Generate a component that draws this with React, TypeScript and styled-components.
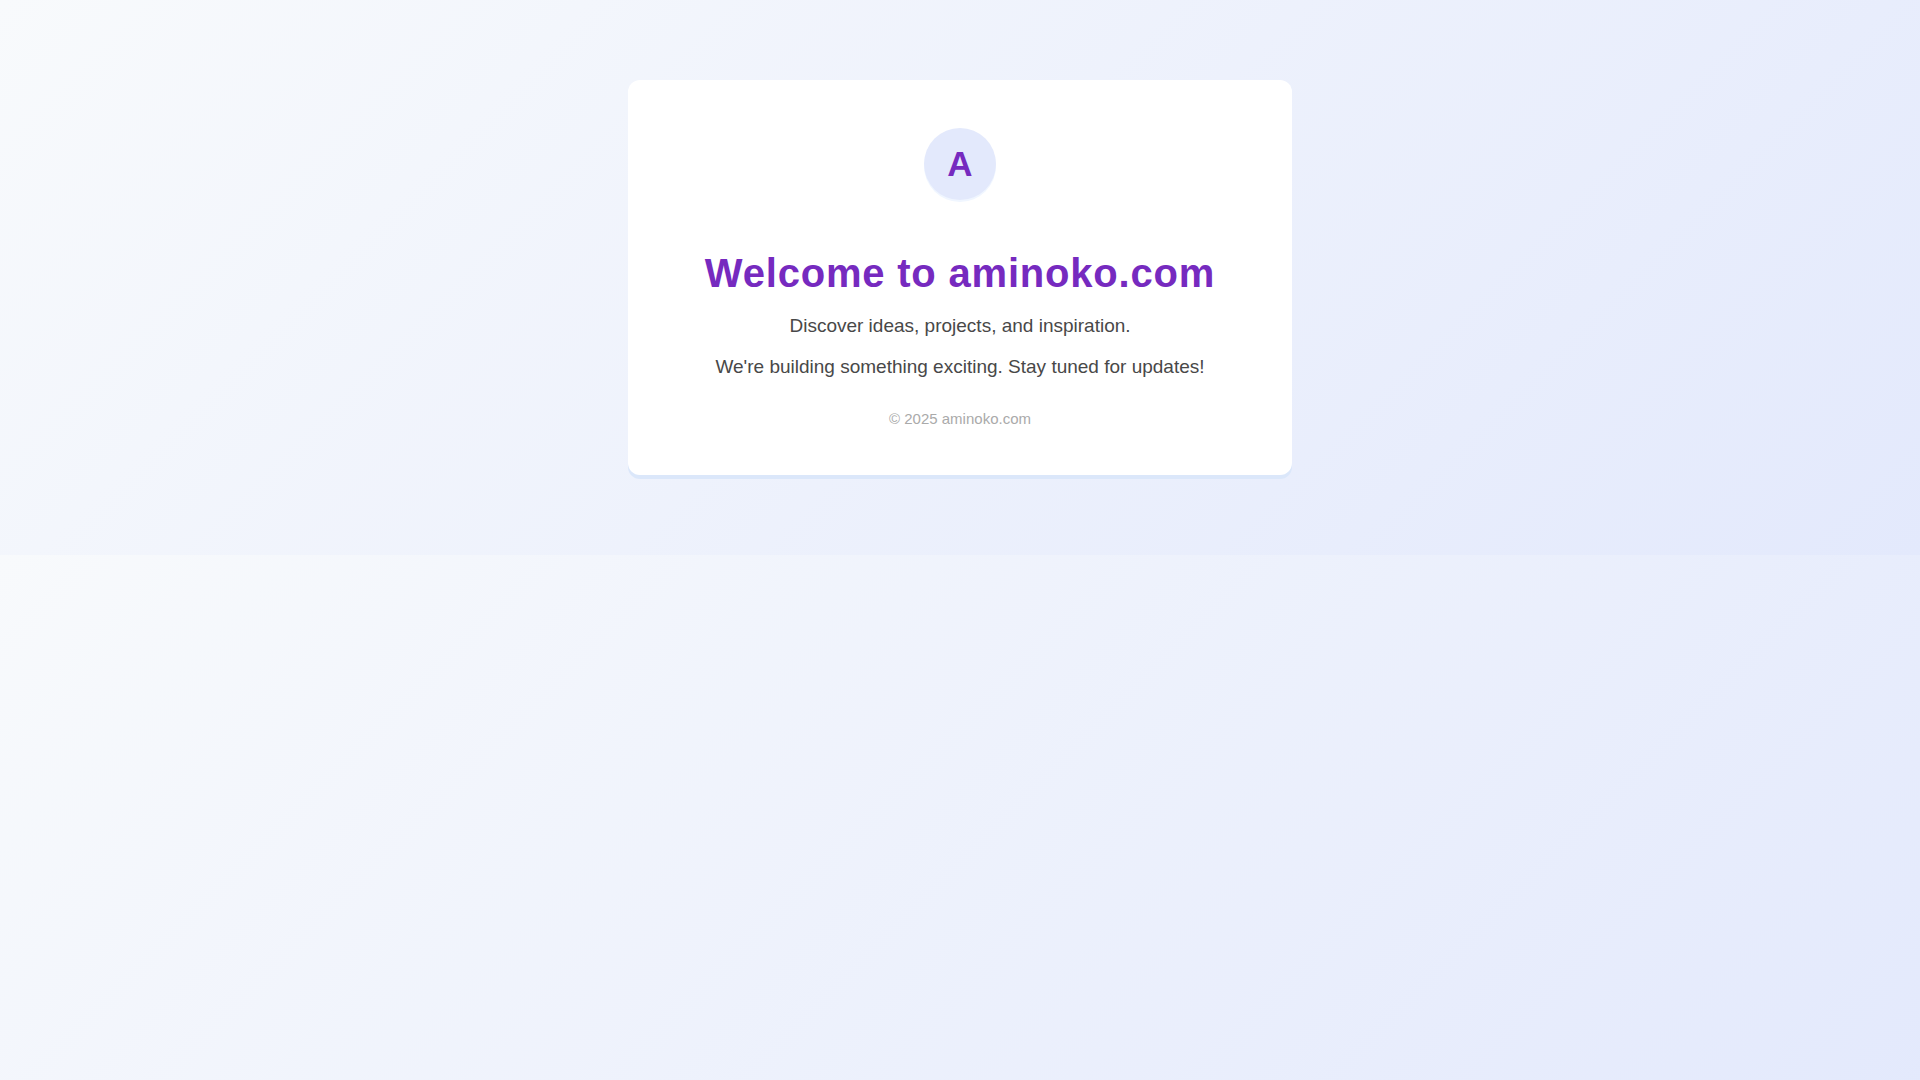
import React from "react";
import styled, { createGlobalStyle } from "styled-components";

const GlobalStyle = createGlobalStyle`
  html {
    background: linear-gradient(135deg, #f8fafc 0%, #e3e9fc 100%);
  }

  body {
    margin: 0;
    font-family: "Liberation Sans", Arial, sans-serif;
    color: #484848;
  }
`;

const Page = styled.main`
  display: flex;
  justify-content: center;
  padding: 80px 24px;
`;

const Card = styled.section`
  display: flex;
  flex-direction: column;
  align-items: center;
  box-sizing: border-box;
  width: 100%;
  max-width: 664px;
  padding: 48px 72px;
  border-radius: 12px;
  background: #ffffff;
  box-shadow: 0 4px 0 #dbe7fa;
  text-align: center;
`;

const Logo = styled.div`
  display: flex;
  align-items: center;
  justify-content: center;
  width: 72px;
  height: 72px;
  margin-bottom: 50px;
  border-radius: 50%;
  background: #e3e9fc;
  box-shadow: 0 2px 0 #f0f6ff;
  color: #762abf;
  font-size: 35px;
  font-weight: 700;
`;

const Title = styled.h1`
  margin: 0 0 19px;
  color: #762abf;
  font-size: 40px;
  line-height: 46px;
  letter-spacing: 0.02em;
`;

const Message = styled.p`
  margin: 0 0 19px;
  font-size: 19px;
  line-height: 22px;
`;

const Footer = styled.footer`
  margin-top: 13px;
  color: #aaaaaa;
  font-size: 15px;
  line-height: 17px;
`;

export default function App() {
  return (
    <>
      <GlobalStyle />
      <Page>
        <Card>
          <Logo>A</Logo>
          <Title>Welcome to aminoko.com</Title>
          <Message>Discover ideas, projects, and inspiration.</Message>
          <Message>We're building something exciting. Stay tuned for updates!</Message>
          <Footer>© 2025 aminoko.com</Footer>
        </Card>
      </Page>
    </>
  );
}
